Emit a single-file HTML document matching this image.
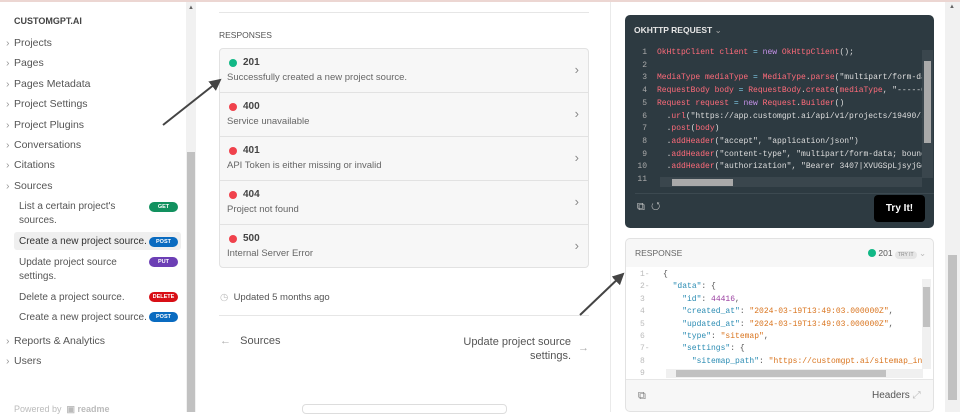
<!DOCTYPE html>
<html><head><meta charset="utf-8"><style>
*{margin:0;padding:0;box-sizing:border-box}
body{width:960px;height:412px;overflow:hidden;background:#fff;font-family:"Liberation Sans",sans-serif;position:relative;color:#333}
.abs{position:absolute}
.top{left:0;top:0;width:960px;height:2px;background:#ecd6d2}
.nav{position:absolute;left:14px;font-size:10.5px;color:#555;white-space:nowrap}
.nav:before{content:"›";position:absolute;left:-8px;color:#999}
.sub{position:absolute;left:19px;font-size:10px;color:#555;line-height:13.5px}
.badge{position:absolute;left:149px;width:29px;height:10px;border-radius:5px;color:#fff;font-size:5.5px;font-weight:bold;text-align:center;line-height:10px}
.code{font-family:"Liberation Mono",monospace;font-size:8px;white-space:pre;line-height:12.7px}
.row{position:absolute;left:220px;width:369px;height:44px;border-bottom:1px solid #e2e2e2}
.dot{position:absolute;left:9px;top:10px;width:8px;height:8px;border-radius:50%}
.rc{position:absolute;left:23px;top:8px;font-size:10px;font-weight:bold;color:#444}
.rd{position:absolute;left:7px;top:23px;font-size:9.5px;color:#666}
.chev{position:absolute;right:10px;top:13px;font-size:13px;color:#888}
</style></head><body>
<div class="abs top"></div>
<div class="abs" style="left:14px;top:16px;font-size:9px;font-weight:bold;color:#444">CUSTOMGPT.AI</div>
<div class="nav" style="top:37px">Projects</div>
<div class="nav" style="top:57px">Pages</div>
<div class="nav" style="top:78px">Pages Metadata</div>
<div class="nav" style="top:98px">Project Settings</div>
<div class="nav" style="top:119px">Project Plugins</div>
<div class="nav" style="top:139px">Conversations</div>
<div class="nav" style="top:159px">Citations</div>
<div class="nav" style="top:180px">Sources</div>
<div class="sub" style="top:200px">List a certain project's<br>sources.</div>
<div class="badge" style="top:202px;background:#12915f">GET</div>
<div class="abs" style="left:14px;top:232px;width:167px;height:18px;background:#efefef;border-radius:3px"></div>
<div class="sub" style="top:235px;color:#333">Create a new project source.</div>
<div class="badge" style="top:237px;background:#0a6bc0">POST</div>
<div class="sub" style="top:256px">Update project source<br>settings.</div>
<div class="badge" style="top:257px;background:#6c3fb5">PUT</div>
<div class="sub" style="top:291px">Delete a project source.</div>
<div class="badge" style="top:292px;background:#d80f16">DELETE</div>
<div class="sub" style="top:311px">Create a new project source.</div>
<div class="badge" style="top:312px;background:#0a6bc0">POST</div>
<div class="nav" style="top:335px">Reports &amp; Analytics</div>
<div class="nav" style="top:355px">Users</div>
<div class="abs" style="left:14px;top:404px;font-size:9px;color:#bbb">Powered by &nbsp;<b>▣ readme</b></div>
<div class="abs" style="left:186px;top:2px;width:10px;height:410px;background:#f1f1f1"></div>
<div class="abs" style="left:187px;top:152px;width:8px;height:260px;background:#c1c1c1"></div>
<div class="abs" style="left:188px;top:5px;font-size:6px;color:#666">▲</div>
<div class="abs" style="left:219px;top:12px;width:370px;height:1px;background:#e6e6e6"></div>
<div class="abs" style="left:219px;top:30px;font-size:8.5px;color:#555">RESPONSES</div>
<div class="abs" style="left:219px;top:48px;width:370px;height:220px;border:1px solid #e2e2e2;border-radius:4px;background:#f7f7f7;overflow:hidden"></div>
<div class="row" style="top:49px"><div class="dot" style="background:#12b886"></div><div class="rc">201</div><div class="rd">Successfully created a new project source.</div><div class="chev">›</div></div>
<div class="row" style="top:93px"><div class="dot" style="background:#f0424c"></div><div class="rc">400</div><div class="rd">Service unavailable</div><div class="chev">›</div></div>
<div class="row" style="top:137px"><div class="dot" style="background:#f0424c"></div><div class="rc">401</div><div class="rd">API Token is either missing or invalid</div><div class="chev">›</div></div>
<div class="row" style="top:181px"><div class="dot" style="background:#f0424c"></div><div class="rc">404</div><div class="rd">Project not found</div><div class="chev">›</div></div>
<div class="row" style="top:225px;border:none;height:42px"><div class="dot" style="background:#f0424c"></div><div class="rc">500</div><div class="rd">Internal Server Error</div><div class="chev">›</div></div>
<div class="abs" style="left:220px;top:292px;font-size:9.5px;color:#555"><span style="color:#bbb">◷</span> &nbsp;Updated 5 months ago</div>
<div class="abs" style="left:219px;top:315px;width:370px;height:1px;background:#e6e6e6"></div>
<div class="abs" style="left:220px;top:335px;font-size:11px;color:#555"><span style="color:#aaa">←</span> &nbsp; Sources</div>
<div class="abs" style="left:440px;top:335px;width:131px;font-size:11px;color:#555;text-align:right;line-height:14px">Update project source settings.</div>
<div class="abs" style="left:578px;top:342px;font-size:11px;color:#aaa">→</div>
<div class="abs" style="left:302px;top:404px;width:205px;height:10px;border:1px solid #ddd;border-radius:4px"></div>
<div class="abs" style="left:610px;top:2px;width:1px;height:410px;background:#eaeaea"></div>
<div class="abs" style="left:625px;top:15px;width:309px;height:213px;background:#2d3a41;border-radius:5px;overflow:hidden">
 <div class="abs" style="left:9px;top:10px;font-size:8.5px;font-weight:bold;color:#e6e6e6">OKHTTP REQUEST <span style="font-weight:normal;color:#aaa">⌄</span></div>
 <div class="abs code" style="left:10px;top:32px;color:#aaa;text-align:right;width:12px">1
2
3
4
5
6
7
8
9
10
11</div>
<div class="abs code" style="left:32px;top:32px;color:#ff6b7a;width:265px;overflow:hidden">OkHttpClient client <span style="color:#7ec8e3">=</span> <span style="color:#c792ea">new</span> OkHttpClient<span style="color:#ddd">();</span>

MediaType mediaType <span style="color:#7ec8e3">=</span> MediaType<span style="color:#ddd">.</span>parse<span style="color:#ddd">("multipart/form-dat</span>
RequestBody body <span style="color:#7ec8e3">=</span> RequestBody<span style="color:#ddd">.</span>create<span style="color:#ddd">(</span>mediaType<span style="color:#ddd">, "-----01</span>
Request request <span style="color:#7ec8e3">=</span> <span style="color:#c792ea">new</span> Request<span style="color:#ddd">.</span>Builder<span style="color:#ddd">()</span>
  <span style="color:#ddd">.</span>url<span style="color:#ddd">("https://app.customgpt.ai/api/v1/projects/19490/so</span>
  <span style="color:#ddd">.</span>post<span style="color:#ddd">(</span>body<span style="color:#ddd">)</span>
  <span style="color:#ddd">.</span>addHeader<span style="color:#ddd">("accept", "application/json")</span>
  <span style="color:#ddd">.</span>addHeader<span style="color:#ddd">("content-type", "multipart/form-data; bounda</span>
  <span style="color:#ddd">.</span>addHeader<span style="color:#ddd">("authorization", "Bearer 3407|XVUGSpLjsyjGqq</span></div>
 <div class="abs" style="left:297px;top:35px;width:11px;height:128px;background:#3a464d"></div>
 <div class="abs" style="left:299px;top:46px;width:7px;height:82px;background:#a9a9a9"></div>
 <div class="abs" style="left:35px;top:162px;width:262px;height:10px;background:#3a464d"></div>
 <div class="abs" style="left:47px;top:164px;width:61px;height:7px;background:#a9a9a9"></div>
 <div class="abs" style="left:10px;top:178px;width:300px;height:1px;background:#3c4950"></div>
 <div class="abs" style="left:12px;top:186px;font-size:11px;color:#ccc">⧉ &nbsp;↺</div>
 <div class="abs" style="left:249px;top:180px;width:51px;height:27px;background:#000;border-radius:4px;color:#fff;font-size:10px;font-weight:bold;text-align:center;line-height:27px">Try It!</div>
</div>
<div class="abs" style="left:625px;top:238px;width:309px;height:174px;border:1px solid #e2e2e2;border-radius:5px;background:#f7f7f7;overflow:hidden">
 <div class="abs" style="left:9px;top:9px;font-size:8.5px;color:#666">RESPONSE</div>
 <div class="abs" style="left:242px;top:9px;font-size:8.5px;color:#555"><span style="display:inline-block;width:8px;height:8px;border-radius:50%;background:#12b886;vertical-align:-1px"></span> 201 <span style="font-size:5px;background:#e6e6e6;border-radius:4px;padding:1px 3px;color:#888">TRY IT</span> <span style="color:#bbb">⌄</span></div>
 <div class="abs" style="left:0;top:28px;width:309px;height:112px;background:#fff"></div>
 <div class="abs code" style="left:14px;top:30px;color:#bbb;line-height:12.4px">1-
2-
3
4
5
6
7-
8
9</div>
 <div class="abs code" style="left:37px;top:30px;color:#555;line-height:12.4px;width:261px;overflow:hidden">{
  <span style="color:#2b8cb3">"data"</span>: {
    <span style="color:#2b8cb3">"id"</span>: <span style="color:#9a3fa0">44416</span>,
    <span style="color:#2b8cb3">"created_at"</span>: <span style="color:#d9741e">"2024-03-19T13:49:03.000000Z"</span>,
    <span style="color:#2b8cb3">"updated_at"</span>: <span style="color:#d9741e">"2024-03-19T13:49:03.000000Z"</span>,
    <span style="color:#2b8cb3">"type"</span>: <span style="color:#d9741e">"sitemap"</span>,
    <span style="color:#2b8cb3">"settings"</span>: {
      <span style="color:#2b8cb3">"sitemap_path"</span>: <span style="color:#d9741e">"https://customgpt.ai/sitemap_inde</span></div>
 <div class="abs" style="left:296px;top:40px;width:9px;height:90px;background:#f0f0f0"></div>
 <div class="abs" style="left:297px;top:48px;width:7px;height:40px;background:#c1c1c1"></div>
 <div class="abs" style="left:40px;top:130px;width:257px;height:9px;background:#f0f0f0"></div>
 <div class="abs" style="left:50px;top:131px;width:210px;height:7px;background:#c1c1c1"></div>
 <div class="abs" style="left:0;top:140px;width:309px;height:1px;background:#e6e6e6"></div>
 <div class="abs" style="left:12px;top:151px;font-size:11px;color:#777">⧉</div>
 <div class="abs" style="left:246px;top:151px;font-size:10px;color:#555">Headers <span style="color:#bbb">⤢</span></div>
</div>
<div class="abs" style="left:945px;top:2px;width:15px;height:410px;background:#f1f1f1"></div>
<div class="abs" style="left:948px;top:255px;width:9px;height:145px;background:#c1c1c1"></div>
<div class="abs" style="left:949px;top:4px;font-size:6px;color:#666">▲</div>
<svg class="abs" style="left:0;top:0" width="960" height="412">
<defs><marker id="a" markerWidth="6" markerHeight="6" refX="5" refY="3" orient="auto"><path d="M0,0 L6,3 L0,6 Z" fill="#444"/></marker></defs>
<line x1="163" y1="125" x2="220" y2="80" stroke="#444" stroke-width="2" marker-end="url(#a)"/>
<line x1="580" y1="315" x2="623" y2="274" stroke="#444" stroke-width="2" marker-end="url(#a)"/>
</svg>
</body></html>
